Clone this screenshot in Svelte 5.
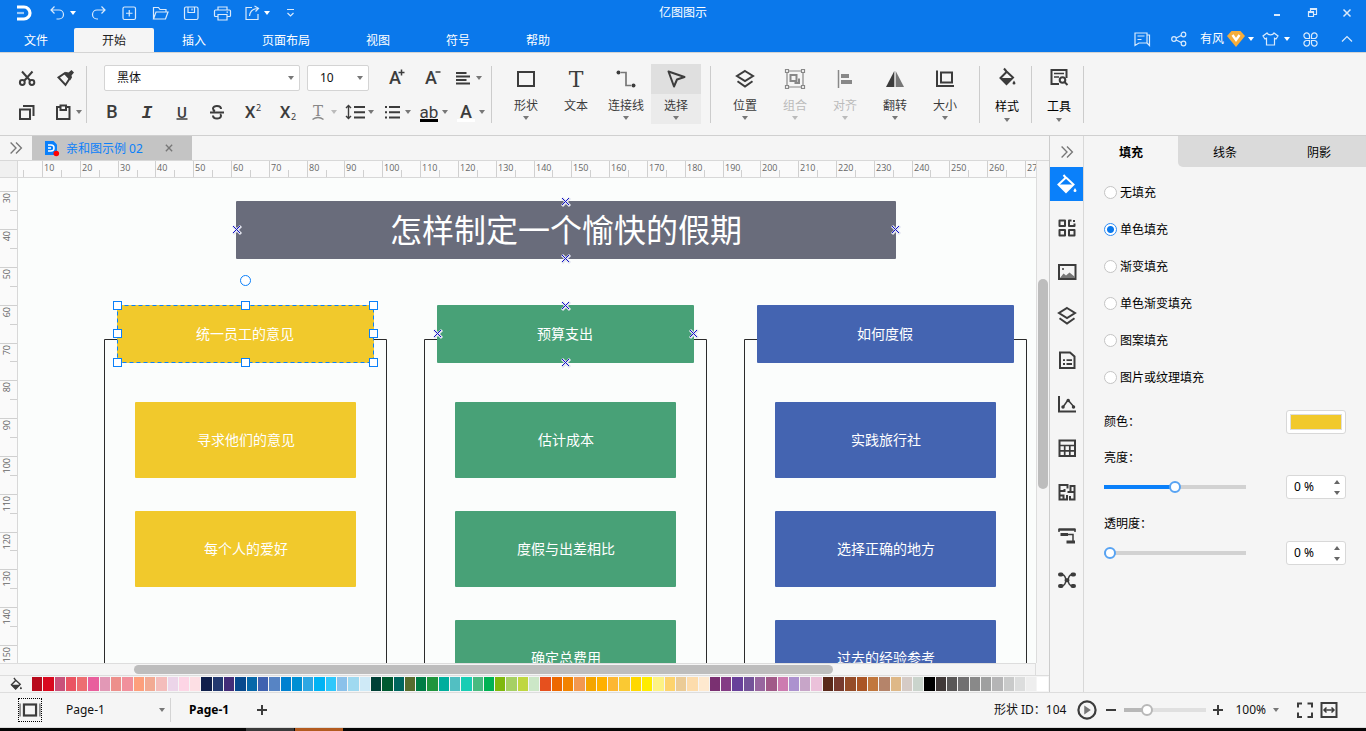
<script>
  const icons = {
    undo: '<path d="M6.500 3.500 3 7l3.500 3.500M3.500 7H11a4.500 4.500 0 0 1 0 9H8.500"/>',
    redo: '<path d="M13.500 3.500 17 7l-3.500 3.500M16.500 7H9a4.500 4.500 0 0 0 0 9h1"/>',
    plus: '<rect x="4" y="4" width="12.500" height="12.500" rx="1.500"/><path d="M10.250 7v6.500M7 10.250h6.500"/>',
    open: '<path d="M3.500 16V4.500h5l1.500 2h6V9M3.500 16l2.500-7h12l-2.500 7z"/>',
    save: '<rect x="3.500" y="4" width="13.500" height="12.500" rx="1.500"/><path d="M7 4v5.500h6.500V4M11 5.500v2"/>',
    print: '<path d="M6 7V4h9v3M6 13.500H3.500a1 1 0 0 1-1-1V8a1 1 0 0 1 1-1h14a1 1 0 0 1 1 1v4.500a1 1 0 0 1-1 1H15M6 11.500h9V17H6zM14.500 9.200h1.500"/>',
    share: '<path d="M10 4.500H4v12h12V11M7.500 13c.5-4.500 3-7 8-7.500M12.500 3l4 2.300-3 3.200"/>',
    more: '<path d="M7 6.500h7M7.500 10l3 3 3-3"/>',
    chat: '<path d="M3 4h12v10H7l-4 2.500zM15 6h2.500v10.500L15 14M5.500 7h7M5.500 10.500h4"/>',
    nodes: '<circle cx="5" cy="10" r="2.300"/><circle cx="14.500" cy="5.500" r="2.300"/><circle cx="14.500" cy="14.500" r="2.300"/><path d="m7.200 9 5-2.500M7.200 11l5 2.500"/>',
    shirt: '<path d="M7 4 3 7l2 3 1.500-.8V16h8V9.200L16 10l2-3-4-3c-1 2.400-6 2.400-7 0z"/>',
    clover: '<path d="M9.500 9.500H6.800a2.800 2.800 0 1 1 2.700-2.800zM11.500 9.500h2.700a2.800 2.800 0 1 0-2.700-2.800zM9.500 11.500H6.800a2.800 2.800 0 1 0 2.700 2.800zM11.500 11.500h2.700a2.800 2.800 0 1 1-2.700 2.800z"/>',
    up: '<path d="m5 12.500 5-5 5 5"/>',
    min: '<path stroke-width="2" d="M7 12h6"/>',
    restore: '<path d="M6.500 8.500h5v5h-5zM8.500 8V5.500h6v6h-2.500"/><path stroke-width="2" d="M6 9h6M8 6h7"/>',
    close: '<path stroke-width="1.500" d="m6.500 6.500 7 7m0-7-7 7"/>',
    cut: '<path stroke-width="2" d="m5 3.500 8.500 9.500M15.500 3.500 7 13"/><circle cx="5.300" cy="14.500" r="2.400" stroke-width="2"/><circle cx="14.900" cy="14.500" r="2.400" stroke-width="2"/>',
    brush: '<path stroke-width="2" d="m9 5-6.500 4.500L9.500 17l4.500-7z"/><path fill="currentColor" stroke="none" d="m7.500 5.500 3-1.500 2 .5L15.500 2l2.500 2.500-2.500 3 .5 2-2 3z"/>',
    copy: '<path stroke-width="2" d="M3 7.500h10V17H3zM6 4h10.500v10"/>',
    paste: '<path stroke-width="2" d="M7 5H4v12h12.500V5h-3"/><path stroke-width="2" d="M7.500 3.500h5.500V8H7.500z"/>',
    strike: '<path stroke-width="2" d="M3 10.500h14M14 7c0-4-8-4-8-.5 0 1.200.8 2 2 2.500M6 13.500c0 4 8 4 8 .3 0-.7-.3-1.200-.8-1.700"/>',
    alignleft: '<path stroke-width="2" d="M3 5h10.500M3 8.500h14M3 12h10.500M3 15.500h14"/>',
    spacing: '<path stroke-width="2" d="M9 5h11M9 10.200h11M9 15.500h11"/><path stroke-width="1.400" d="M3.500 4v12M1 6l2.500-2.500L6 6M1 14l2.500 2.500L6 14"/>',
    list: '<path stroke-width="2" d="M7 5h11M7 10.200h11M7 15.500h11M3 5h2M3 10.200h2M3 15.500h2"/>',
    rect: '<rect stroke-width="2" x="2" y="3" width="16" height="14"/>',
    link: '<circle cx="2.500" cy="3.500" r="2" fill="currentColor" stroke="none"/><circle cx="17.500" cy="16.500" r="2" fill="currentColor" stroke="none"/><path stroke="#777" stroke-width="1.700" d="M5 3.500h5v13h5"/>',
    cursor: '<path stroke-width="2" stroke-linejoin="round" d="M2.500 2.500 18.500 8 11 10.500 8 17.500z"/>',
    layers: '<path stroke-width="2" d="m10 2 8 5-8 5-8-5zM2.500 12.200 10 17.500l7.500-5.300"/>',
    group: '<path d="M2 2h16v16H2z"/><path stroke-width="2" d="M5.500 6h6v6h-6zM14 9.500V14H9.500"/><path fill="#f5f5f5" d="M.5.500h3v3h-3zM16.500.500h3v3h-3zM.5 16.500h3v3h-3zM16.500 16.500h3v3h-3z"/>',
    align: '<path stroke-width="1.500" d="M3.500 1v18"/><path stroke-width="4" d="M6 7h8M6 13h11"/>',
    flip: '<path fill="currentColor" stroke="none" d="M9.300 2v16H1z"/><path fill="#777" stroke="none" d="M10.700 2v16H19z"/>',
    size: '<path stroke-width="2" d="M6 3.500h11v10H6zM2 1.500V17h17"/>',
    bucket: '<path stroke-width="2" d="m8.500 3.500 7.500 7-6.500 6.500L3.500 11 9.500 5M7 1.500l2.500 3"/><path fill="currentColor" stroke="none" d="M3 11h13l-6.500 6.800zM17 13.500l1.500 2.500a1.500 1.500 0 1 1-3 0z"/>',
    fillicon: '<path stroke-width="2" d="m9 3.500 7.500 7L9 18 1.500 10.500 9 3.500M6.500 1l3 3.500"/><path fill="currentColor" stroke="none" d="M1.500 10.500h15L9 18zM18 14l1.500 2.500a1.500 1.500 0 1 1-3 0z"/>',
    tool: '<path stroke-width="2" d="M10 17H2.500V3h15v8"/><path stroke-width="1.500" d="M5 6.500h10M5 10h5"/><circle cx="13.500" cy="13" r="2.800" stroke-width="2"/><path stroke-width="2" d="m15.500 15 3 3"/>',
    dbl: '<path stroke-width="1.500" d="m4 4 6 6-6 6M10 4l6 6-6 6"/>',
    grid: '<path stroke-width="2" stroke-linejoin="round" d="M2.500 2.500H8V8H2.500zM2.500 12H8v5.500H2.500zM12 12h5.500v5.500H12zM14.500 2.500H12V8h5.500V5.500M16 3h2"/>',
    image: '<rect stroke-width="2" x="2" y="3" width="16.500" height="14"/><path fill="#777" stroke="none" d="m3 16 3.500-4.500 2.500 2 3.500-3L18 15v1z"/><circle cx="6" cy="7" r="1" fill="currentColor" stroke="none"/>',
    doc: '<path stroke-width="2" d="M3 2.500h10l4.500 4V18H3z"/><path stroke-width="1.800" d="M6 10.200h2M9.500 10.200H15M6 14h2M9.500 14H15"/>',
    chart: '<path stroke-width="2" d="M2 2v15.500h17"/><path stroke-width="1.500" d="m6 13 5-7 6 7"/><path stroke-width="3.500" stroke-linecap="round" d="M6 13h.01M11.200 6.500h.01M16.500 13h.01"/>',
    table: '<rect stroke-width="2" x="2.500" y="2.500" width="15.500" height="15.500"/><path stroke-width="1.700" d="M2.500 7.500H18M2.500 12.800H18M7.700 7.500V18M12.800 7.500V18"/>',
    plan: '<path stroke-width="2" d="M2.500 3h8v3.500M2.500 2v15.500H10V13M2.500 9h5V7M2.500 13.500h4v3.500M10.500 10h3V4h4v13.500h-4.500V14M17.500 10h-4"/>',
    gantt: '<path stroke-width="2.500" d="M1.500 3.500h17"/><path stroke-width="3" d="M3.500 8.500h7.500M9.500 16H18"/><path stroke-width="1.500" d="M2 3v3M18 3v3M11 8.500h5V15"/>',
    mind: '<path stroke-width="1.500" d="M4 4.500c6 0 3.500 5.700 6 5.700s0-5.700 6-5.700M4 16c6 0 3.500-5.800 6-5.800s0 5.800 6 5.800"/><path stroke-width="4" stroke-linecap="round" d="M3 4.500h1.500M3 16h1.500M15.500 4.500H17M15.500 16H17M9.500 10.200h1"/>',
    fit: '<rect stroke-width="2" x="4.500" y="5" width="11" height="10"/><path stroke="#888" stroke-width="1.500" d="M1 4v12M19 4v12"/>',
    play: '<circle cx="10" cy="10" r="7.800" stroke-width="2"/><path fill="#777" stroke="none" d="m7.500 6 6 4-6 4z"/>',
    full: '<path stroke-width="2" d="M3 7.500V3.500h4M12.500 3.500h4.500v4M17 12.500v4.500h-4.500M7 17H3v-4.500"/>',
    width: '<rect stroke-width="2" x="2.500" y="3" width="15" height="14"/><path stroke-width="1.500" d="M5.500 10h9M7.500 7.500 5 10l2.500 2.500M12.500 7.500 15 10l-2.500 2.500"/>',
    add: '<path stroke-width="2" d="M10 5v10M5 10h10"/>',
    sub: '<path stroke-width="2" d="M5 10h10"/>'
  };

  const quick = [['撤销', 'undo', 1], ['重做', 'redo'], ['新建', 'plus'], ['打开', 'open'], ['保存', 'save'], ['打印', 'print'], ['导出', 'share', 1], ['更多', 'more']];
  const menus = ['文件', '开始', '插入', '页面布局', '视图', '符号', '帮助'];
  const tools = [['形状', 'rect', 1], ['文本', 'T', 0], ['连接线', 'link', 1], ['选择', 'cursor', 1]];
  const arrange = [['位置', 'layers'], ['组合', 'group', 1], ['对齐', 'align', 1], ['翻转', 'flip'], ['大小', 'size']];
  const rail = ['fillicon', 'grid', 'image', 'layers', 'doc', 'chart', 'table', 'plan', 'gantt', 'mind'];
  const railNames = ['填充', '符号库', '图片', '图层', '页面', '图表', '表格', '平面图', '甘特图', '思维导图'];
  const fills = ['无填充', '单色填充', '渐变填充', '单色渐变填充', '图案填充', '图片或纹理填充'];
  const swatches = ('b80a1c d9091f c9527a ea5463 ed6e72 e95f9d e298b6 ed8f8b f1909c fd9f7c f2aa93 f4bdbb ecd5e9 fdd5e5 fddfe4 ' +
    '10204c 243a70 432d78 08498d 0668a9 4062b0 5784c4 0081d0 008fd3 2ea7e3 00b3f4 2fc7fb 8bc1ea 9fd9f0 cfeaf7 ' +
    '014036 005a31 00665f 576c2e 007c45 20953d 00ae9d 52bfc2 18cdb4 48ba80 00b254 7fb80e a6d064 bfd740 cce7c7 ' +
    'e6501e ed6800 f28300 f29850 f4a500 ffb000 fdb733 fac933 ffd800 ffec00 fdf284 fdd36d ebcb96 fddcac fee9cf ' +
    '7a3071 843c85 68409a 745399 98679f a15a88 cd7bb0 ac92cf c7a5c8 ebc1da ' +
    '5a291a 773a2e 954c28 aa5525 c1773d b5846a deb887 d5cbc6 cad4cc ' +
    '000000 403938 595757 717071 898989 9fa0a0 b5b5b6 c9caca dcdddd eeeeee ffffff').split(' ');

  const hTicks = Array.from({ length: 54 }, (_, i) => ({ x: Math.round(5.2 + i * 18.9), v: i % 2 ? (i + 1) * 5 : null }));
  const vTicks = Array.from({ length: 26 }, (_, i) => ({ y: Math.round(13.3 + i * 18.9), v: i % 2 ? null : 30 + i * 5 }));

  const groups = [
    { x: 104, color: '#f1c92c', head: '统一员工的意见', items: ['寻求他们的意见', '每个人的爱好'] },
    { x: 424, color: '#48a177', head: '预算支出', items: ['估计成本', '度假与出差相比', '确定总费用'] },
    { x: 744, color: '#4464b1', head: '如何度假', items: ['实践旅行社', '选择正确的地方', '过去的经验参考'] }
  ];
  const marks = [[565, 201], [236, 229], [895, 229], [565, 258], [565, 305], [437, 333], [693, 333], [565, 362]];
  const handles = [[117, 305], [245, 305], [373, 305], [117, 333], [373, 333], [117, 362], [245, 362], [373, 362]];

  let fill = $state('单色填充');
  let bright = $state(0);
  let clear = $state(0);
  let zoom = $state(23);
</script>

{#snippet icon(name, size = 20)}
  <svg class="icon" width={size} height={size} viewBox="0 0 20 20" aria-hidden="true">{@html icons[name]}</svg>
{/snippet}
{#snippet caret()}<i class="caret"></i>{/snippet}
{#snippet glyph(text, family, size, extra)}
  <svg class="icon" width="20" height="20" viewBox="0 0 20 20"><text x="10" y="16" text-anchor="middle" class={family} font-size={size}>{text}</text>{@html extra ?? ''}</svg>
{/snippet}

<div class="app">
  <header>
    <div class="titlebar">
      <div class="quick">
        <svg class="logo" width="18" height="18" viewBox="0 0 18 18" aria-hidden="true"><path d="M2 3h7a5.500 5.500 0 0 1 0 12H2" fill="none" stroke="#fff" stroke-width="3.200"/><path d="M2 9h7" stroke="#9cc9f8" stroke-width="2.200"/></svg>
        {#each quick as [label, name, drop]}
          <button aria-label={label} class:drop>{@render icon(name)}{#if drop}{@render caret()}{/if}</button>
        {/each}
      </div>
      <h1>亿图图示</h1>
      <div class="window">
        <button aria-label="最小化">{@render icon('min')}</button>
        <button aria-label="还原">{@render icon('restore')}</button>
        <button aria-label="关闭">{@render icon('close')}</button>
      </div>
    </div>
    <div class="menubar">
      <nav>
        {#each menus as m}<button class:active={m === '开始'}>{m}</button>{/each}
      </nav>
      <div class="account">
        <button aria-label="消息">{@render icon('chat')}</button>
        <button aria-label="分享">{@render icon('nodes')}</button>
        <button class="user">有风<svg width="20" height="18" viewBox="0 0 20 18"><path d="M5.500 1h9L19 6l-9 11L1 6z" fill="#f5ad3c"/><path d="m6.500 5 3.500 5 3.500-5" fill="none" stroke="#fff" stroke-width="2.400"/></svg>{@render caret()}</button>
        <button class="user theme" aria-label="主题">{@render icon('shirt')}{@render caret()}</button>
        <button aria-label="应用">{@render icon('clover')}</button>
        <button aria-label="收起">{@render icon('up')}</button>
      </div>
    </div>
  </header>

  <div class="ribbon">
    <div class="clip">
      <button aria-label="剪切">{@render icon('cut')}</button>
      <button aria-label="格式刷">{@render icon('brush')}</button>
      <button aria-label="复制">{@render icon('copy')}</button>
      <button aria-label="粘贴" class="paste">{@render icon('paste')}{@render caret()}</button>
    </div>
    <div class="font">
      <div class="row one">
        <label class="pick family"><select aria-label="字体"><option>黑体</option></select>{@render caret()}</label>
        <label class="pick pt"><select aria-label="字号"><option>10</option></select>{@render caret()}</label>
        <button aria-label="增大字号">{@render glyph('A', 'sans', 18, '<path stroke-width="1.500" d="M13.500 4.500h6M16.500 1.500v6"/>')}</button>
        <button aria-label="减小字号">{@render glyph('A', 'sans', 18, '<path stroke-width="1.500" d="M14.500 4h5"/>')}</button>
        <button aria-label="段落对齐" class="wide">{@render icon('alignleft')}{@render caret()}</button>
      </div>
      <div class="row two">
        <button aria-label="粗体">{@render glyph('B', 'sans', 18)}</button>
        <button aria-label="斜体">{@render glyph('I', 'ital', 18)}</button>
        <button aria-label="下划线">{@render glyph('U', 'sans', 15, '<path stroke-width="1.500" d="M4.500 17h11"/>')}</button>
        <button aria-label="删除线">{@render icon('strike')}</button>
        <button aria-label="上标">{@render glyph('X', 'sans left', 17, '<text x="14" y="9" font-size="9">2</text>')}</button>
        <button aria-label="下标">{@render glyph('X', 'sans left', 17, '<text x="14" y="18" font-size="9">2</text>')}</button>
        <button aria-label="文字效果" class="wide off">{@render glyph('T', 'slab lift', 15, '<path stroke-width="1.500" d="M4.500 17.500q5.500-4 11 0"/>')}{@render caret()}</button>
        <button aria-label="行距" class="wide">{@render icon('spacing')}{@render caret()}</button>
        <button aria-label="项目符号" class="wide">{@render icon('list')}{@render caret()}</button>
        <button aria-label="突出显示" class="wide">{@render glyph('ab', 'thin', 17, '<path stroke="#000" stroke-width="3" d="M1 18.500h18"/>')}{@render caret()}</button>
        <button aria-label="字体颜色" class="wide">{@render glyph('A', 'sans', 18, '<path stroke="#fff" stroke-width="3" d="M1 18.500h18"/>')}{@render caret()}</button>
      </div>
    </div>
    <div class="tools draw">
      {#each tools as [label, name, drop]}
        <button class:chosen={label === '选择'}>
          <span class="pic">{#if name === 'T'}{@render glyph('T', 'slab big', 22)}{:else}{@render icon(name)}{/if}</span>
          <span class="name">{label}</span>{#if drop}{@render caret()}{/if}
        </button>
      {/each}
    </div>
    <div class="tools">
      {#each arrange as [label, name, off]}
        <button class:off disabled={!!off}><span class="pic">{@render icon(name)}</span><span class="name">{label}</span>{@render caret()}</button>
      {/each}
    </div>
    <div class="tools solo"><button><span class="pic">{@render icon('bucket')}</span><span class="name">样式</span>{@render caret()}</button></div>
    <div class="tools solo"><button><span class="pic">{@render icon('tool')}</span><span class="name">工具</span>{@render caret()}</button></div>
  </div>

  <main>
    <section class="editor">
      <div class="doctabs">
        <button class="expand" aria-label="展开">{@render icon('dbl', 18)}</button>
        <div class="doctab">
          <svg width="16" height="17" viewBox="0 0 16 17" aria-hidden="true"><path d="M1 1h8.500L13 4.500V15H1z" fill="#0a80fa"/><path d="M4 5h3a2.800 2.800 0 0 1 0 6H4M4 8h3" fill="none" stroke="#fff" stroke-width="1.500"/><circle cx="12.300" cy="13.500" r="2.800" fill="#f00"/></svg>
          <span>亲和图示例 02</span>
          <button aria-label="关闭文档">{@render icon('close', 18)}</button>
        </div>
      </div>
      <div class="board">
        <div class="corner"></div>
        <svg class="hruler" aria-hidden="true">
          {#each hTicks as t}
            <path d="M{t.x + 0.5} {t.v ? 0 : 9}V16" />
            {#if t.v}<text x={t.x + 2} y="10">{t.v}</text>{/if}
          {/each}
        </svg>
        <div class="vtop"></div>
        <svg class="vruler" aria-hidden="true">
          {#each vTicks as t}
            <path d="M{t.v ? 0 : 10} {t.y + 0.5}H17" />
            {#if t.v}<text text-anchor="end" transform="translate(10 {t.y + 2}) rotate(-90)">{t.v}</text>{/if}
          {/each}
        </svg>
        <svg class="canvas" role="img" aria-label="亲和图">
          <g transform="translate(-18 -178)">
            <rect x="236" y="201" width="660" height="58" rx="1" fill="#696c7b" />
            <text class="title" x="566" y="242">怎样制定一个愉快的假期</text>
            {#each groups as g}
              <path class="frame" d="M{g.x + 0.5} 1000V339.500H{g.x + 282.5}V1000" />
              <rect x={g.x + 13} y="305" width="257" height="58" rx="1" fill={g.color} />
              <text x={g.x + 141} y="339">{g.head}</text>
              {#each g.items as item, i}
                <rect x={g.x + 31} y={402 + i * 109} width="221" height="76" rx="1" fill={g.color} />
                <text x={g.x + 142} y={445 + i * 109}>{item}</text>
              {/each}
            {/each}
            {#each marks as [x, y]}
              <path class="halo" d="M{x - 3} {y - 3}l8 8m0-8l-8 8" />
              <path class="mark" d="M{x - 3} {y - 3}l7 7m0-7l-7 7" />
            {/each}
            <rect class="dash" x="117.500" y="305.500" width="256" height="57" />
            {#each handles as [x, y]}
              <rect class="handle" x={x - 3.5} y={y - 3.5} width="8" height="8" />
            {/each}
            <circle class="handle" cx="245.500" cy="280.500" r="5" />
          </g>
        </svg>
        <div class="vscroll"><i></i></div>
        <div class="hscroll"><i></i></div>
      </div>
      <div class="palette">
        <button class="fillbtn" aria-label="填充颜色">{@render icon('bucket', 14)}</button>
        <div class="colors">
          {#each swatches as c}<button aria-label="#{c}" style="background:#{c}"></button>{/each}
        </div>
      </div>
    </section>

    <div class="rail">
      <button class="fold" aria-label="折叠">{@render icon('dbl', 18)}</button>
      {#each rail as name, i}
        <button class:on={i === 0} aria-label={railNames[i]}>{@render icon(name)}</button>
      {/each}
    </div>

    <aside>
      <div class="ptabs">
        <button class="active">填充</button><button>线条</button><button>阴影</button>
      </div>
      <div class="fields">
        {#each fills as f}
          <label class="radio"><input type="radio" name="fill" value={f} bind:group={fill} />{f}</label>
        {/each}
        <div class="line color"><span>颜色：</span><button class="colorbox" aria-label="颜色"><i></i></button></div>
        <label class="cap" for="bright">亮度：</label>
        <div class="line">
          <input id="bright" type="range" min="-100" max="100" bind:value={bright} style="--p:{(bright + 100) / 2}%" />
          <div class="spin"><input aria-label="亮度值" value="{bright} %" /><span><button aria-label="增加" onclick={() => bright++}></button><button aria-label="减少" onclick={() => bright--}></button></span></div>
        </div>
        <label class="cap last" for="clear">透明度：</label>
        <div class="line">
          <input id="clear" type="range" min="0" max="100" bind:value={clear} style="--p:{clear}%" />
          <div class="spin"><input aria-label="透明度值" value="{clear} %" /><span><button aria-label="增加" onclick={() => clear++}></button><button aria-label="减少" onclick={() => clear--}></button></span></div>
        </div>
      </div>
    </aside>
  </main>

  <footer>
    <button class="fit" aria-label="页面视图">{@render icon('fit', 22)}</button>
    <label class="pick page"><select aria-label="页面"><option>Page-1</option></select>{@render caret()}</label>
    <button class="current">Page-1</button>
    <button aria-label="添加页面">{@render icon('add')}</button>
    <span class="shape">形状 ID：104</span>
    <button aria-label="演示">{@render icon('play', 22)}</button>
    <button class="tight" aria-label="缩小">{@render icon('sub')}</button>
    <input class="zoomer" aria-label="缩放" type="range" bind:value={zoom} style="--p:{zoom}%" />
    <button class="tight" aria-label="放大">{@render icon('add')}</button>
    <button class="percent">100%{@render caret()}</button>
    <button aria-label="全屏">{@render icon('full')}</button>
    <button aria-label="适合宽度">{@render icon('width')}</button>
  </footer>
  <div class="taskbar"><i></i><i></i></div>
</div>

<style>
  :global(body) { margin: 0; }
  .app {
    display: flex; flex-direction: column; height: 100vh; overflow: hidden;
    background: #f5f5f5; color: #111; font: 12px/16px "Noto Sans", "Noto Sans CJK SC", sans-serif;
  }
  button { display: flex; align-items: center; justify-content: center; padding: 0; border: 0; background: none; color: inherit; font: inherit; white-space: nowrap; }
  select, input { font: inherit; color: inherit; }
  .icon { display: block; flex: none; overflow: visible; fill: none; stroke: currentColor; stroke-width: 1.2; }
  .icon :global(text) { fill: currentColor; stroke: none; font-family: "Noto Sans", sans-serif; }
  .icon .sans { font-family: Roboto, sans-serif; font-weight: 500; }
  .icon .thin { font-family: Roboto, sans-serif; }
  .icon .left { transform: translateX(-2px); }
  .icon .lift { transform: translateY(-2px); }
  .icon .ital { font-family: "Liberation Mono", monospace; font-style: italic; font-weight: 700; }
  .icon .slab { font-family: "DejaVu Serif", serif; }
  .icon .big { transform: translateY(2px); }
  .caret { flex: none; width: 0; height: 0; border: 3px solid transparent; border-top: 4px solid #777; border-bottom: 0; }

  header { flex: none; height: 52px; background: #0a78eb; color: #fff; border-bottom: 1px solid #d4d4d4; }
  header .icon { color: #d9eafc; }
  header .caret { border-top-color: #fff; }
  .titlebar { display: grid; grid-template-columns: 1fr auto 1fr; height: 26px; align-items: center; }
  .titlebar h1 { margin: 0; font: inherit; }
  .quick { display: flex; align-items: center; padding-left: 15px; }
  .logo { margin-right: 8px; }
  .quick button { width: 31px; height: 26px; }
  .quick .drop { width: 41px; gap: 2px; }
  .quick .drop:nth-last-child(2) { width: 37px; }
  .window { display: flex; justify-content: flex-end; padding-right: 2px; }
  .window button { width: 35px; height: 24px; }
  .menubar { display: flex; justify-content: space-between; height: 26px; }
  nav { display: flex; padding-top: 2px; }
  nav button { height: 24px; padding: 2px 28px 0; }
  nav button:first-child { padding: 2px 26px 0 24px; }
  nav .active { background: #f5f5f5; color: #222; border-radius: 2px 2px 0 0; }
  .account { display: flex; align-items: center; gap: 17px; padding-right: 9px; }
  .account .user { gap: 2px; margin: 0 -5px 0 -6px; }
  .account .theme { gap: 4px; margin-right: -7px; }

  .ribbon { display: flex; flex: none; align-items: center; height: 82px; border-bottom: 1px solid #d0d0d0; color: #3c3c3c; }
  .ribbon > div { box-sizing: border-box; height: 57px; border-right: 1px solid #ccc; }
  .clip { display: grid; grid-template-columns: 40px 38px; grid-template-rows: 26px 26px; row-gap: 8px; width: 87px; padding: 2px 0 0 7px; align-content: center; }
  .clip .paste { padding-left: 3px; gap: 3px; }
  .font { width: 405px; display: grid; grid-template-rows: 26px 26px; row-gap: 8px; align-content: center; padding: 2px 0 0 7px; }
  .row { display: flex; }
  .one { padding-left: 10px; }
  .one button { width: 36px; }
  .two button { width: 35px; }
  .row .wide { width: 37px; gap: 3px; }
  .pick { display: grid; align-items: center; }
  .pick > * { grid-area: 1 / 1; }
  .pick select { appearance: none; width: 100%; height: 100%; border: 0; background: none; outline: none; }
  .pick .caret { justify-self: end; margin-right: 5px; pointer-events: none; }
  .font .pick { box-sizing: border-box; border: 1px solid #d4d4d4; border-radius: 2px; background: #fff; color: #111; }
  .font select { padding: 0 12px; }
  .family { width: 196px; margin-right: 7px; }
  .pt { width: 62px; margin-right: 8px; }
  .tools { display: flex; padding: 0 9px; align-items: center; }
  .tools button { flex: none; flex-direction: column; justify-content: flex-start; width: 50px; height: 60px; }
  .pic { display: flex; align-items: center; justify-content: center; width: 100%; height: 30px; }
  .name { height: 22px; line-height: 24px; }
  .chosen { background: #ebebeb; }
  .chosen .pic { background: #dfdfdf; }
  .draw { width: 219px; }
  .tools.solo { width: 52px; padding: 0 0 0 2px; color: #000; }
  .solo .icon { color: #3c3c3c; }
  .solo .pic { height: 26px; }
  .solo .name { height: 28px; line-height: 34px; }
  .off { color: #888; }
  .off .name { color: #bbb; }
  .off .caret { border-top-color: #bbb; }

  main { display: flex; flex: 1; min-height: 0; }
  .editor { display: flex; flex: 1; flex-direction: column; min-width: 0; border-right: 1px solid #ccc; }
  .doctabs { display: flex; flex: none; height: 24px; border-bottom: 1px solid #d8d8d8; color: #777; }
  .expand { width: 32px; }
  .doctab { display: flex; align-items: center; width: 148px; padding-left: 12px; background: #c4c4c4; color: #0a80fa; }
  .doctab span { flex: 1; margin-left: 6px; padding-top: 2px; }
  .doctab button { width: 46px; color: #777; }
  .board { display: grid; flex: 1; min-height: 0; grid-template: 17px minmax(0, 1fr) 12px / 18px minmax(0, 1fr) 13px; }
  .board svg { display: block; width: 100%; height: 100%; }
  .corner { background: #f0f0f0; }
  .corner, .vruler { box-sizing: border-box; border-right: 1px solid #d8d8d8; }
  .hruler, .corner { box-sizing: border-box; border-bottom: 1px solid #d8d8d8; }
  .hruler, .vruler { background: #fafafa; stroke: #d0d0d0; fill: none; overflow: hidden; }
  .hruler text, .vruler text { fill: #666; stroke: none; font: 9px "Open Sans", sans-serif; }
  .vtop, .vscroll { border-left: 1px solid #ddd; }
  .canvas { background: #fbfdfc; overflow: hidden; }
  .canvas text { fill: #fff; text-anchor: middle; font: 14px "Noto Sans CJK SC", sans-serif; }
  .canvas .title { font-size: 32px; }
  .frame { fill: none; stroke: #2b2b2b; }
  .halo { stroke: #e2e4ee; stroke-width: 3; }
  .mark { stroke: #1010c8; }
  .dash { fill: none; stroke: #0a80fa; stroke-dasharray: 4 3; }
  .handle { fill: #fff; stroke: #0a80fa; }
  .vscroll { display: grid; grid-template-rows: 101fr 209fr 174fr; }
  .vscroll i { grid-row: 2; margin: 0 1px; border-radius: 5px; background: #bdbdbd; }
  .hscroll { grid-column: 1 / 3; display: grid; grid-template-columns: 134fr 700fr 202fr; border-top: 1px solid #ddd; border-right: 1px solid #ddd; }
  .hscroll i { grid-column: 2; margin: 1px 0; border-radius: 5px; background: #bdbdbd; }
  .palette { display: flex; flex: none; height: 16px; border-top: 1px solid #ddd; color: #3c3c3c; }
  .fillbtn { width: 32px; }
  .colors { display: flex; flex: 1; gap: 1px; padding: 1px 1px 1px 0; }
  .colors button { flex: 1; }

  .rail { flex: none; width: 33px; border-right: 1px solid #d8d8d8; color: #3c3c3c; }
  .rail button { width: 33px; height: 34px; margin-bottom: 10px; }
  .rail .fold { height: 31px; margin: 0; color: #777; }
  .rail .on { background: #0a80fa; color: #fff; }

  aside { flex: none; width: 282px; color: #000; }
  .ptabs { display: flex; height: 31px; }
  .ptabs button { flex: 1; background: #dadada; padding-top: 2px; }
  .ptabs .active { background: none; font-weight: 700; padding-right: 0; }
  .ptabs button:nth-child(2) { border-radius: 0 0 0 5px; }
  .fields { padding: 7px 20px; }
  .radio { display: flex; align-items: center; gap: 3px; height: 37px; }
  .radio input { appearance: none; flex: none; box-sizing: border-box; width: 13px; height: 13px; margin: 0; border: 1px solid #c4c4c4; border-radius: 50%; background: #fff; }
  .radio input:checked { border-color: #2f8df5; background: radial-gradient(circle, #0a78eb 3px, #fff 4px); }
  .line { display: flex; align-items: center; justify-content: space-between; height: 36px; }
  .color { height: 51px; }
  .cap { display: flex; align-items: center; height: 22px; }
  .last { margin-top: 8px; }
  .colorbox { display: block; width: 60px; height: 24px; padding: 3px; border: 1px solid #d8d8d8; border-radius: 3px; background: #fff; }
  .colorbox i { display: block; height: 100%; box-sizing: border-box; border: 1px solid #ddd; background: #f1c92c; }
  input[type="range"] { appearance: none; width: 142px; height: 12px; margin: 0; background: linear-gradient(#0a80fa, #0a80fa) 0 50% / var(--p) 4px no-repeat, linear-gradient(#d2d2d2, #d2d2d2) 0 50% / 100% 4px no-repeat; }
  input[type="range"]::-webkit-slider-thumb { appearance: none; box-sizing: border-box; width: 12px; height: 12px; border: 2px solid #57a3f3; border-radius: 50%; background: #fff; }
  .spin { display: flex; box-sizing: border-box; width: 60px; height: 24px; border: 1px solid #d8d8d8; border-radius: 3px; background: #fff; }
  .spin input { flex: 1; min-width: 0; padding: 0 0 0 7px; border: 0; background: none; outline: none; }
  .spin span { display: flex; flex-direction: column; align-items: center; justify-content: center; gap: 7px; width: 16px; }
  .spin button { width: 0; height: 0; border: 3px solid transparent; border-bottom: 4px solid #666; border-top: 0; }
  .spin button + button { border-top: 4px solid #666; border-bottom: 0; }

  footer { display: flex; flex: none; align-items: center; height: 34px; padding: 0 27px 0 18px; border-top: 1px solid #ddd; border-bottom: 1px solid #ddd; color: #3c3c3c; }
  footer .fit { width: 24px; height: 24px; box-sizing: border-box; outline: 1px dotted #000; outline-offset: -1px; }
  .page { width: 128px; height: 24px; border-right: 1px solid #d4d4d4; color: #111; }
  .page select { padding-left: 24px; }
  .current { margin: 0 23px 0 18px; color: #000; font-weight: 700; }
  .shape { margin: 0 10px 0 auto; color: #111; }
  .tight { margin: 0 3px; }
  .zoomer + .tight { margin: 0 7px 0 2px; }
  footer input[type="range"] { width: 82px; background: linear-gradient(#b8b8b8, #b8b8b8) 0 50% / var(--p) 4px no-repeat, linear-gradient(#e0e0e0, #e0e0e0) 0 50% / 100% 4px no-repeat; }
  .zoomer::-webkit-slider-thumb { border-color: #b8b8b8 !important; }
  .percent { gap: 7px; margin-right: 16px; color: #111; }
  .percent + button { margin-right: 4px; }
  .taskbar { display: grid; flex: none; grid-template-columns: 246fr 48fr 1fr 48fr 1023fr; height: 3px; background: #050505; }
  .taskbar i { grid-column: 2; background: #3a3a3a; }
  .taskbar i + i { grid-column: 4; background: #b35b1f; }
</style>
